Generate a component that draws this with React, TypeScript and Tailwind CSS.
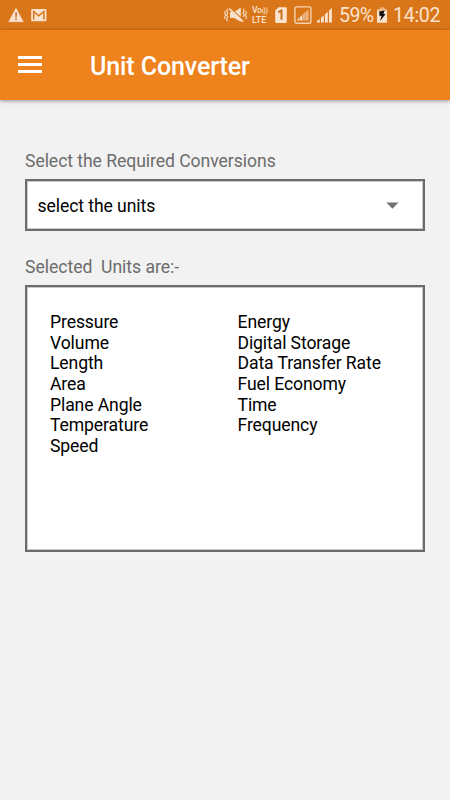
import React from "react";

const leftUnits = ["Pressure", "Volume", "Length", "Area", "Plane Angle", "Temperature", "Speed"];
const rightUnits = ["Energy", "Digital Storage", "Data Transfer Rate", "Fuel Economy", "Time", "Frequency"];

function WarningIcon() {
  return (
    <svg className="ml-[8px] shrink-0" width="16" height="30" viewBox="0 0 16 30">
      <path d="M8 8.2 L15.3 21.8 H0.7 Z" fill="#fbe3cd" stroke="#fbe3cd" strokeWidth="0.5" strokeLinejoin="round" />
      <path d="M7.2 12.6 h1.7 l-0.3 4.8 h-1.1z M7.3 18.5 h1.5 v1.6 h-1.5z" fill="#b8621a" />
    </svg>
  );
}

function MailIcon() {
  return (
    <svg className="ml-[7px] shrink-0" width="16" height="30" viewBox="0 0 16 30">
      <rect x="0.2" y="9" width="15.2" height="12.2" rx="1.3" fill="#fbe3cd" />
      <path d="M2.7 19.5 V11.5 L7.8 15.8 L12.9 11.5 V19.5" fill="none" stroke="#d9761a" strokeWidth="1.5" />
    </svg>
  );
}

function MuteVibrateIcon() {
  return (
    <svg className="shrink-0" width="24" height="30" viewBox="0 0 24 30">
      <path d="M6 12 H10.3 L16.8 7.6 V22 L10.3 18 H6 Z" fill="#f8dfc8" />
      <path d="M6.5 8.2 L19.8 20.4" stroke="#d9761a" strokeWidth="1.2" />
      <path d="M5.2 8.6 L19.2 21.6" stroke="#f8dfc8" strokeWidth="1.5" />
      <path d="M3.6 8.8 l-1 2 1.2 2.1 -1.2 2.1 1.2 2.1 -1.2 2.1 1 2 M1.2 11 l-.5 2 .9 2 -.9 2 .5 2 M19.2 8.8 l1 2 -1.2 2.1 1.2 2.1 -1.2 2.1 M21.8 11 l.5 2 -.9 2 .9 2 -.5 2" fill="none" stroke="#f8dfc8" strokeWidth="1.1" />
    </svg>
  );
}

function SimIcon() {
  return (
    <svg className="ml-[7px] shrink-0" width="12" height="30" viewBox="0 0 12 30">
      <path d="M3.5 7.3 H10.5 Q11.8 7.3 11.8 8.6 V21.6 Q11.8 22.9 10.5 22.9 H1.5 Q.2 22.9 .2 21.6 V10.6 Z" fill="#fbe3cd" />
      <path d="M3.3 12.2 L6.5 10.6 V19.8" fill="none" stroke="#c46b19" strokeWidth="1.9" />
    </svg>
  );
}

function BoxedSignalIcon() {
  return (
    <svg className="ml-[7px] shrink-0" width="18" height="30" viewBox="0 0 18 30">
      <rect x="0.9" y="6.9" width="16" height="16.3" rx="1.5" fill="none" stroke="#f6d3b0" strokeWidth="1.4" />
      <path d="M3.3 20.6 V19.4 L5.4 17.5 V20.6Z M6 20.6 V17 L8.3 14.9 V20.6Z" fill="#fbe3cd" />
      <path d="M8.6 20.6 V14.6 L11.3 12.2 V20.6Z M11.6 20.6 V12 L14.5 9.4 V20.6Z" fill="#eeb580" />
    </svg>
  );
}

function SignalIcon() {
  return (
    <svg className="ml-[5px] shrink-0" width="16" height="30" viewBox="0 0 16 30">
      <path d="M0 22.6 V21 L2.8 18.9 V22.6Z M4 22.6 V17.8 L6.8 15.3 V22.6Z M8 22.6 V14.2 L10.8 11.7 V22.6Z M12 22.6 V10.6 L14.9 8 V22.6Z" fill="#fbe3cd" />
    </svg>
  );
}

function BatteryIcon() {
  return (
    <svg className="ml-[4px] shrink-0" width="11" height="30" viewBox="0 0 11 30">
      <path d="M3 7.7 H7.3 V9 H10 V22.7 H0 V9 H3Z" fill="#fbe3cd" />
      <path d="M3 7.7 H7.3 V9 H10 V11 H0 V9 H3Z" fill="#efb985" />
      <path d="M7.6 10.4 L2.2 11.6 L2.6 16.2 L4.6 15.8 L3 21.2 L8.6 14 L6.4 14Z" fill="#111" />
    </svg>
  );
}

function UnitList({ units }: { units: string[] }) {
  return (
    <ul className="w-[187.5px] shrink-0 whitespace-nowrap text-[17.6px] leading-[20.6px] tracking-[-0.11px] text-black">
      {units.map((unit) => (
        <li key={unit}>{unit}</li>
      ))}
    </ul>
  );
}

export default function App() {
  return (
    <div className="flex h-[800px] w-[450px] flex-col overflow-hidden bg-[#f2f2f2] font-[Roboto,sans-serif]">
      <div className="flex h-[30px] shrink-0 items-center bg-[#d9761a] text-[#fbe3cd]">
        <WarningIcon />
        <MailIcon />
        <div className="w-[177px] shrink-0" />
        <MuteVibrateIcon />
        <div className="ml-[4px] w-[16px] shrink-0 text-[9px] font-medium leading-[9px]">
          <div className="whitespace-nowrap text-[8.5px] tracking-[-0.2px]">Vo<span className="text-[7px]">ı))</span></div>
          <div>LTE</div>
        </div>
        <SimIcon />
        <BoxedSignalIcon />
        <SignalIcon />
        <span className="ml-[6px] mt-px w-[34px] shrink-0 whitespace-nowrap text-[19.6px] leading-[30px] tracking-[-0.6px]">59%</span>
        <BatteryIcon />
        <span className="ml-[5px] mt-px whitespace-nowrap text-[19.6px] leading-[30px] tracking-[-0.3px]">14:02</span>
      </div>
      <header className="z-10 flex h-[70px] shrink-0 items-center bg-[#ee831e] pl-[18px] shadow-[0_1px_4px_rgba(0,0,0,0.4)]">
        <button aria-label="Menu" className="mt-[-1px] flex w-6 flex-col gap-[4px]">
          <span className="h-[3px] bg-white" />
          <span className="h-[3px] bg-white" />
          <span className="h-[3px] bg-white" />
        </button>
        <h1 className="ml-[48px] mt-[3px] text-[25px] font-medium leading-[30px] tracking-[-0.1px] text-white">Unit Converter</h1>
      </header>
      <main className="flex flex-col px-[25px] pt-[50px]">
        <p className="h-[29px] text-[17.6px] leading-[22px] tracking-[-0.06px] text-[#6c6c6c]">Select the Required Conversions</p>
        <div className="flex h-[52px] items-center justify-between border-2 border-[#6c6c6c] bg-white pl-[10.5px] pr-[24px] shadow-[inset_0_0_0_1px_#c8c8c8]">
          <span className="mt-px text-[17.6px] leading-[22px] tracking-[-0.08px] text-black">select the units</span>
          <svg width="13" height="7" viewBox="0 0 13 7">
            <path d="M0.3 0.5 H12.5 L6.4 6.7Z" fill="#727272" />
          </svg>
        </div>
        <p className="mt-[25px] h-[29px] whitespace-pre text-[17.6px] leading-[22px] tracking-[-0.03px] text-[#6c6c6c]">Selected  Units are:-</p>
        <div className="flex h-[267px] border-2 border-[#6c6c6c] bg-white pl-[23px] pt-[25.3px] shadow-[inset_0_0_0_1px_#c8c8c8]">
          <UnitList units={leftUnits} />
          <UnitList units={rightUnits} />
        </div>
      </main>
    </div>
  );
}
